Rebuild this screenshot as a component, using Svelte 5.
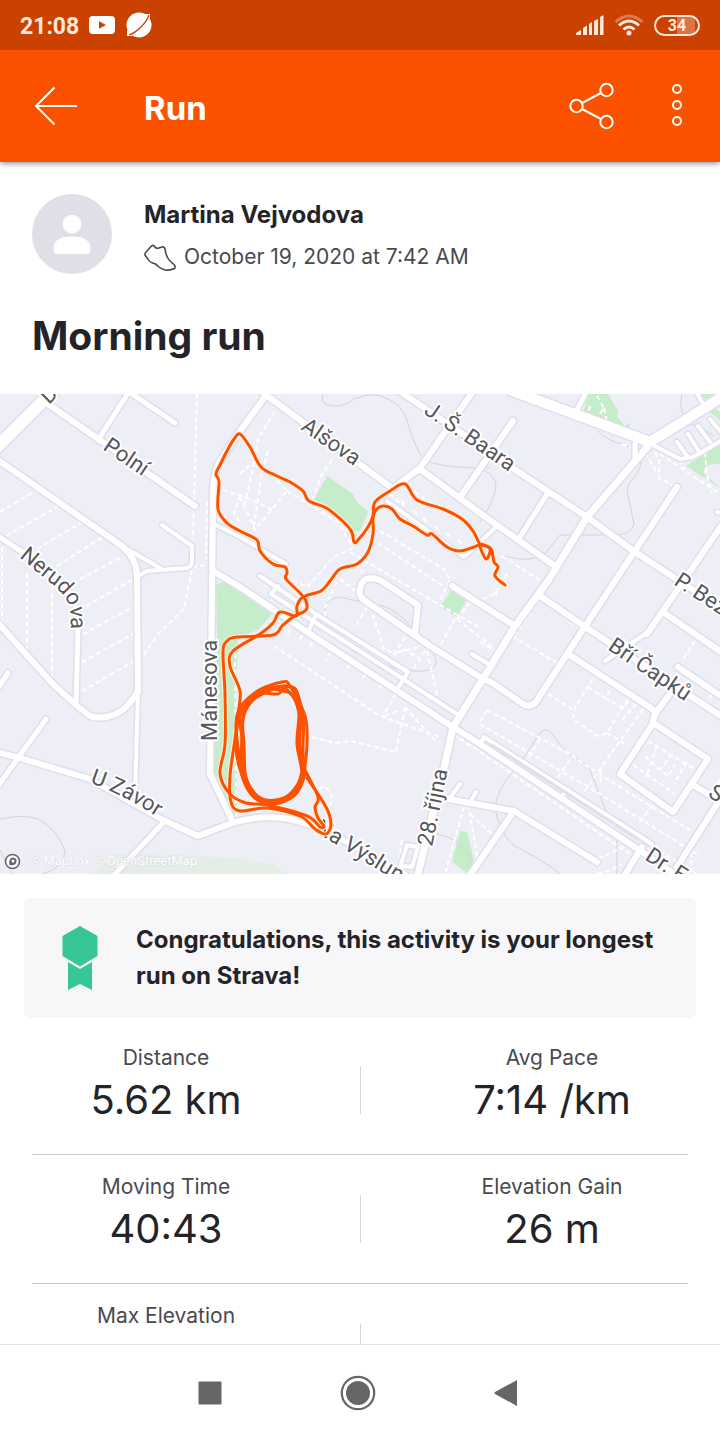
<script lang="ts">
	type Point = [number, number];

	const stats = [
		[
			{ label: 'Distance', value: '5.62 km' },
			{ label: 'Avg Pace', value: '7:14 /km' }
		],
		[
			{ label: 'Moving Time', value: '40:43' },
			{ label: 'Elevation Gain', value: '26 m' }
		],
		[{ label: 'Max Elevation', value: '' }, { label: '', value: '' }]
	];

	const parks = [
		'M327 82L353 100L357 108L368 118L360 137L353 138L343 125L314 105Z',
		'M216 190L225 188L272 220L258 236L238 243L236 300L237 410L234 424L222 404L214 380L217 240Z',
		'M452 195L467 205L457 223L440 213Z',
		'M460 437L467 438L474 467L467 479L452 468Z',
		'M588 0L608 0L618 17L617 22L625 32L630 29L628 36L583 19Z',
		'M686 72L720 50L720 70Q702 69 704 79L720 94Z',
		'M702 0L714 0L705 6L720 18L720 26L706 16Z'
	];

	const contours = [
		'M323 0Q320 9 328 11Q342 15 354 5Q374 -4 390 6Q402 12 407 26Q416 58 425 66Q440 74 490 74',
		'M482 75Q496 82 496 92Q494 108 480 128',
		'M598 37Q606 46 622 50Q640 56 641 69Q640 78 630 88Q625 94 629 106L634 130Q632 140 616 141L560 141L545 160Q536 166 520 165L503 162',
		'M325 217Q322 206 340 203L366 209Q396 210 415 238',
		'M433 258Q442 275 424 277Q402 278 383 270Q350 262 327 233',
		'M523 365L537 343Q545 330 553 341Q560 352 570 361Q584 366 590 376L607 420',
		'M513 378Q496 396 495 415Q500 438 512 450L550 472L560 480',
		'M617 440L617 480',
		'M437 440Q462 444 472 467',
		'M0 425Q24 420 38 425Q58 436 65 457Q65 474 42 480',
		'M0 456L12 480',
		'M682 0Q677 18 691 30Q706 36 714 42'
	];

	const roads = [
		{ d: 'M-4 54L54 -4', w: 12 },
		{ d: 'M45 8L195 112', w: 6 },
		{ d: 'M130 -4L98 46M126 -4L175 29', w: 5 },
		{ d: 'M-2 66L122 152Q137 165 137 182L138 298', w: 6 },
		{ d: 'M122 152L160 174M138 182L147 177L187 174Q192 172 192 168L192 152L162 131M138 296L135 404', w: 4 },
		{ d: 'M-2 142L16 154Q70 186 76 214L78 236L76 310', w: 5 },
		{ d: 'M-2 229L53 290L76 311L90 322Q104 326 118 319Q128 314 138 297', w: 6 },
		{ d: 'M-2 294L8 279M-2 392L46 325', w: 5 },
		{ d: 'M-4 358L20 364L90 385L163 426L198 442L232 429Q262 420 290 425L322 434L410 484', w: 6 },
		{ d: 'M164 428L115 480', w: 5 },
		{ d: 'M270 -4L240 37L218 70Q213 84 213 100L210 380L233 428', w: 6 },
		{ d: 'M262 -2L392 94M474 -4L420 74L395 93', w: 6 },
		{ d: 'M387 107L464 163L496 133', w: 4 },
		{ d: 'M420 75L480 119L555 172M461 102L513 27', w: 6 },
		{ d: 'M398 -4L517 77L587 123L635 158L724 216', w: 6 },
		{ d: 'M510 -4L580 22L650 48L724 2', w: 10 },
		{ d: 'M586 -2L577 16M635 50L635 65M520 143L547 100', w: 5 },
		{ d: 'M650 50L587 123L548 187L515 232L483 285L453 333L445 370L417 484', w: 7 },
		{ d: 'M677 93L580 240L536 308Q531 314 523 310L491 288L483 285', w: 6 },
		{ d: 'M540 202L593 238L724 324M452 192L515 232', w: 6 },
		{ d: 'M724 128L647 240M663 218L724 260M678 273L724 304', w: 6 },
		{ d: 'M648 238L605 267M724 120L717 118', w: 4 },
		{ d: 'M568 260L648 312L655 317M671 298L655 320L652 331L620 380L673 418L708 365L655 330M693 391L720 407M717 410L677 473', w: 6 },
		{ d: 'M214 130L240 143L286 170M260 182L316 220L408 278L398 294M278 192L271 200L403 285L457 320M315 223L308 238', w: 4 },
		{ d: 'M213 177L240 193L310 240L453 333L480 350L645 460L680 484', w: 6 },
		{ d: 'M480 350L484 343L652 450M568 396L562 402', w: 4 },
		{ d: 'M415 240L418 211L380 186Q362 180 360 195Q358 203 368 209L413 240L430 252L483 285', w: 6 },
		{ d: 'M472 260L490 271M450 404L460 390M470 408L476 398M398 480L407 451L418 453L412 473L402 472', w: 4 },
		{ d: 'M448 405L514 417L597 468M514 417L468 484M642 453L623 484', w: 6 },
		{ d: 'M655 52L680 65L693 63L724 45M677 48L687 62M688 40L698 56M698 32L710 48M710 25L722 39M696 -2L702 8', w: 4 }
	];

	const footpaths = [
		'M197 0L193 145M207 107L206 165M192 173L206 171M192 176L184 215L158 240L143 262',
		'M0 118L35 97M6 142L57 113M37 155L82 128M57 172L103 143M80 185L122 163M86 212L133 185M83 240L133 213M82 268L133 240M82 297L138 265',
		'M2 153L2 233M27 180L27 256M52 192L52 283',
		'M275 17L258 45L252 80L243 115M268 57L262 80L253 137M215 94L240 101L273 116M240 80L254 67M272 80L287 97L254 137M240 103L256 137M287 97L338 128L352 152M332 66L321 82L313 104',
		'M240 101L234 120L240 128M353 154L334 163L307 193L290 185M350 158L433 207L480 234M373 133L444 175L450 185L440 207M378 149L443 192M363 167L361 180M340 185L360 200M337 188L325 213L325 230',
		'M390 100L404 112M401 107L406 112M413 116L418 120M423 124L427 128M435 132L439 137M446 139L450 143M458 146L462 150M415 98L440 115',
		'M367 213L355 233M370 213L384 255L397 260M405 243L394 261M398 258L424 252M427 257L438 305M425 257L410 280M403 255L424 267M497 202L493 194M455 225L440 252M457 225L495 255M457 225L470 208',
		'M274 252L280 256L380 322L440 343M397 317L382 323M290 235L286 243M302 241L298 249M312 248L309 256M330 258L326 267M350 270L346 278M365 280L361 288M382 290L378 298M396 300L383 322M405 313L396 358M405 313L436 348M312 343L335 349L350 347L396 358M453 340L470 352',
		'M590 12L586 26M597 2L604 14L597 24M604 14L607 28M622 50L647 62L658 80M597 117L637 70M655 58L659 66L659 84L676 93M660 60L720 100M680 65L685 75M705 58L707 82L712 100',
		'M502 162L544 189M507 180L495 200L483 205M540 205L516 240L497 262M545 208L580 235',
		'M512 242L557 269M480 248L496 257M548 300L572 315M593 285L575 313L573 325L597 342L607 339L628 305M588 293L605 304L610 297M605 304L623 314L628 307M607 339L628 352M643 315L600 375L583 400M636 310L620 328M695 247L682 267M712 300L706 310',
		'M487 316L480 328M487 316L570 360L602 382L690 436M480 330L600 400L700 462M540 345L527 367M570 366L558 383M600 375L601 388M640 428L654 409M480 358L640 467M460 344L480 358',
		'M648 347L694 375M633 371L675 400M657 352L646 383M672 360L660 376L668 382L675 371M687 368L674 390M645 362L660 376',
		'M660 457L720 495M597 480L608 477L622 470M598 465L625 452M690 450L692 478',
		'M466 405L462 420L445 480M468 410L478 465M470 420L492 440M398 475L402 445M238 252L235 265L236 424M319 395L325 392L332 402L330 414'
	];

	// Street names run along their own baseline
	const names = [
		{ text: 'D', d: 'M49 11L90 -30' },
		{ text: 'Polní', d: 'M102 55L170 101' },
		{ text: 'Nerudova', d: 'M19 163L48 187Q66 200 70 214L72 260' },
		{ text: 'Alšova', d: 'M300 35L380 90' },
		{ text: 'J. Š. Baara', d: 'M423 19L540 99' },
		{ text: 'P. Bez', d: 'M673 190L800 273' },
		{ text: 'Bří Čapků', d: 'M607 255L720 331' },
		{ text: 'Mánesova', d: 'M217 347L217 220' },
		{ text: 'U Závor', d: 'M90 389Q130 402 180 439' },
		{ text: 'Na Výslun', d: 'M314 438Q335 449 440 514' },
		{ text: '28. října', d: 'M432 453L454 345' },
		{ text: 'Dr. E', d: 'M644 465L760 541' },
		{ text: 'Š', d: 'M707 402L800 460' }
	];

	const outbound: Point[] = [
		[505, 191], [495, 182], [498, 173], [494, 168], [492, 157], [489, 153], [480, 151],
		[486, 165], [490, 155], [480, 151], [474, 153], [460, 157], [447, 153], [432, 140],
		[427, 141], [413, 132], [400, 125], [392, 115], [383, 112], [375, 117], [373, 125],
		[373, 140], [368, 158], [357, 170], [340, 175], [330, 187], [321, 197], [303, 203],
		[297, 212], [296, 222], [280, 218], [273, 229], [260, 240], [233, 257], [230, 272],
		[240, 297], [238, 320], [235, 345], [230, 382], [231, 408], [240, 417], [267, 414],
		[300, 422], [315, 435], [326, 440], [331, 430], [326, 413], [307, 384]
	];

	const inbound: Point[] = [
		[305, 376], [318, 403], [315, 413], [318, 424], [324, 432], [320, 433], [307, 422],
		[267, 411], [246, 409], [230, 400], [220, 380], [225, 350], [225, 300], [223, 258],
		[227, 247], [237, 243], [273, 241], [282, 232], [293, 223], [306, 216], [306, 207],
		[300, 199], [286, 185], [287, 179], [285, 173], [273, 170], [260, 157], [257, 146],
		[240, 137], [227, 129], [218, 115], [219, 88], [216, 80], [220, 71], [227, 57],
		[234, 45], [240, 40], [250, 53], [261, 73], [277, 82], [290, 88], [303, 97],
		[309, 107], [328, 115], [350, 135], [354, 148], [358, 146], [368, 133], [373, 122],
		[375, 108], [390, 97], [405, 90], [417, 106], [443, 115], [462, 125], [473, 137],
		[480, 151]
	];

	const laps: Point[][] = [
		[[296, 296], [299, 320], [297, 350], [302, 382], [292, 400], [272, 409], [256, 403], [246, 386], [244, 350], [243, 325], [252, 307], [269, 297], [284, 293]],
		[[293, 302], [300, 325], [300, 352], [305, 378], [294, 402], [272, 408], [254, 403], [241, 378], [242, 345], [240, 322], [252, 303], [267, 295], [283, 297]],
		[[295, 295], [303, 324], [303, 350], [302, 385], [290, 404], [270, 410], [255, 400], [240, 375], [236, 348], [241, 318], [255, 302], [275, 293]],
		[[290, 292], [305, 322], [307, 350], [303, 380], [292, 401], [272, 407], [258, 404], [244, 380], [237, 345], [238, 318], [256, 298], [282, 288]],
		[[286, 295], [301, 318], [298, 350], [302, 380], [288, 402], [270, 409], [252, 400], [244, 376], [242, 345], [245, 315], [260, 300], [278, 300]]
	];

	// Rounds a list of points off into one flowing line
	function smooth(points: Point[], closed = false) {
		const n = points.length;
		const at = (i: number) => (closed ? points[(i + n) % n] : points[Math.max(0, Math.min(n - 1, i))]);
		let d = `M${points[0]}`;
		for (let i = 0; i < (closed ? n : n - 1); i++) {
			const [a, b, c, e] = [at(i - 1), at(i), at(i + 1), at(i + 2)];
			d += `C${b[0] + (c[0] - a[0]) / 6},${b[1] + (c[1] - a[1]) / 6} ${c[0] - (e[0] - b[0]) / 6},${c[1] - (e[1] - b[1]) / 6} ${c}`;
		}
		return d;
	}

	const route = [smooth(outbound), smooth(inbound)];
	const track = laps.map((lap) => smooth(lap, true));
</script>

<div class="screen">
	<div class="status">
		<span class="clock">21:08</span>
		<svg width="26" height="18" viewBox="0 0 26 18" aria-hidden="true">
			<rect width="26" height="18" rx="4" fill="#fff" />
			<path d="M10 5.2v7.6L17 9z" fill="#cb4100" />
		</svg>
		<svg width="28" height="28" viewBox="0 0 28 28" aria-hidden="true">
			<circle cx="14" cy="14" r="12.5" fill="#fff" />
			<path d="M18 3L25 3L25 9zM2 19L2 25L8 25z" fill="#fff" />
			<path d="M4 24Q10 22 16 16Q22 10 24 4" fill="none" stroke="#cb4100" stroke-width="1.300" />
		</svg>
		<span class="spacer"></span>
		<svg width="28" height="20" viewBox="0 0 28 20" fill="#ffe9df" aria-hidden="true">
			<path d="M0 20v-2l5-3v5zM7 20v-7l4-2.500v9.500zM13 20V9l3-2v13zM18 20V6l4-2v16zM24 20V2l3.500-2v20z" />
		</svg>
		<svg width="30" height="22" viewBox="0 0 30 22" fill="none" stroke="#ffe9df" stroke-width="3" aria-hidden="true">
			<path d="M1.500 8Q15 -4 28.500 8" opacity=".35" />
			<path d="M5 11.500Q15 2.500 25 11.500M9.500 15.500Q15 10.500 20.500 15.500" />
			<circle cx="15" cy="19" r="2.500" fill="#ffe9df" stroke="none" />
		</svg>
		<span class="battery">34</span>
	</div>

	<header class="bar">
		<button aria-label="Back">
			<svg width="44" height="40" viewBox="0 0 44 40" fill="none" stroke="#fff" stroke-width="2">
				<path d="M20.500 1.500L2 20L20.500 38.500M2 20H43" />
			</svg>
		</button>
		<h1>Run</h1>
		<button aria-label="Share">
			<svg width="46" height="48" viewBox="0 0 46 48" fill="none" stroke="#fff" stroke-width="2">
				<circle cx="7.500" cy="24" r="6.200" />
				<circle cx="37.500" cy="8" r="6.200" />
				<circle cx="37.500" cy="40" r="6.200" />
				<path d="M13 21L32 11M13 27L32 37" />
			</svg>
		</button>
		<button aria-label="More options">
			<svg width="12" height="44" viewBox="0 0 12 44" fill="none" stroke="#fff" stroke-width="2">
				<circle cx="6" cy="5" r="4" />
				<circle cx="6" cy="21" r="4" />
				<circle cx="6" cy="37" r="4" />
			</svg>
		</button>
	</header>

	<main>
		<section class="athlete">
			<svg width="80" height="80" viewBox="0 0 80 80" aria-hidden="true">
				<circle cx="40" cy="40" r="40" fill="#dfdfe8" />
				<circle cx="40" cy="30" r="9.300" fill="#fff" />
				<path d="M21.500 54Q22 42.500 40 42.500Q58 42.500 58.500 54Q58.500 57 57 60H23Q21.500 57 21.500 54Z" fill="#fff" />
			</svg>
			<div>
				<p class="name">Martina Vejvodova</p>
				<p class="date">
					<svg width="32" height="27" viewBox="0 0 32 27" fill="none" stroke="#494950" stroke-width="1.600" stroke-linejoin="round" aria-hidden="true">
						<path d="M1 11Q0.500 9.500 2 8L7.500 2Q9 0.500 10.500 2.500Q12 5 15 4L18 3Q20.500 2.500 21 5Q22 13 26 17L30 20.500Q32 23 30.500 24.500Q27 26.500 21 26Q17 25 14.500 22.500Q12 19.500 7.500 18.500Q5 17.500 3.500 14.500Z" />
					</svg>
					October 19, 2020 at 7:42 AM
				</p>
			</div>
		</section>

		<h2>Morning run</h2>

		<svg class="map" viewBox="0 0 720 480" role="img" aria-label="Route map">
			<rect width="720" height="480" fill="#eeeef7" />
			<path d="M93 480L115 460L200 462L240 465L273 470L287 480Z" fill="#e4eee6" />
			{#each parks as d}
				<path {d} fill="#c5edc9" />
			{/each}
			<g fill="none" stroke="#d3d3d6" stroke-width="1">
				{#each contours as d}
					<path {d} />
				{/each}
			</g>
			<g class="footpaths">
				{#each footpaths as d}
					<path {d} />
				{/each}
			</g>
			<g class="roads">
				{#each roads as road}
					<path d={road.d} stroke="#dfdeee" stroke-width={road.w + 3} />
				{/each}
				{#each roads as road}
					<path d={road.d} stroke="#fff" stroke-width={road.w} />
				{/each}
				<path d="M492 351L638 445" stroke="#dfdeee" stroke-width="3" />
			</g>
			<g class="street-names">
				{#each names as name, i}
					<path id="street-{i}" d={name.d} fill="none" stroke="none" />
					<text><textPath href="#street-{i}">{name.text}</textPath></text>
				{/each}
			</g>
			<g class="route">
				{#each route as d}
					<path {d} stroke="#fff0de" stroke-width="5" />
				{/each}
				{#each route as d}
					<path {d} stroke="#fc5200" stroke-width="3" />
				{/each}
				{#each track as d}
					<path {d} stroke="#fc5200" stroke-width="3" />
				{/each}
				<path d="M241 368Q247 409 272 408Q297 407 303 380" stroke="#fc5200" stroke-width="6" />
			</g>
			<circle cx="12.500" cy="467.500" r="7" fill="#fff" stroke="#66666c" stroke-width="1.600" />
			<path d="M9.500 471Q8 464 13 463.500Q17 464 16.500 467.500Q16 472 9.500 471Z" fill="#66666c" />
			<circle cx="13" cy="467" r="1.500" fill="#fff" />
			<text class="credit" x="30" y="471">© Mapbox © OpenStreetMap</text>
		</svg>

		<section class="award">
			<svg width="36" height="64" viewBox="0 0 36 64" fill="#37c797" aria-hidden="true">
				<path d="M18 0L35.500 10V30L18 40.500L0.500 30V10Z" />
				<path d="M6 36L18 43L30 36V64L18 58L6 64Z" />
			</svg>
			<p>Congratulations, this activity is your longest run on Strava!</p>
		</section>

		<section class="stats">
			{#each stats as row}
				<div class="row">
					{#each row as stat}
						<div class="stat">
							<span class="label">{stat.label}</span>
							<span class="value">{stat.value}</span>
						</div>
					{/each}
				</div>
			{/each}
		</section>
	</main>

	<nav>
		<button aria-label="Recent apps">
			<svg width="24" height="24" viewBox="0 0 24 24"><rect x="0.500" y="0.500" width="23" height="23" rx="1" fill="#666" /></svg>
		</button>
		<button aria-label="Home">
			<svg width="36" height="36" viewBox="0 0 36 36">
				<circle cx="18" cy="18" r="16.200" fill="none" stroke="#666" stroke-width="2.200" />
				<circle cx="18" cy="18" r="12" fill="#666" />
			</svg>
		</button>
		<button aria-label="Go back">
			<svg width="28" height="28" viewBox="0 0 28 28"><path d="M23 1V27L1 15Q0 14 1 13Z" fill="#666" /></svg>
		</button>
	</nav>
</div>

<style>
	:global(body) {
		margin: 0;
		background: #fff;
	}

	.screen {
		display: flex;
		flex-direction: column;
		height: 100vh;
		overflow: hidden;
		font-family: Inter, 'Liberation Sans', sans-serif;
		color: #242428;
	}

	p,
	h1,
	h2 {
		margin: 0;
	}

	svg {
		display: block;
		flex: none;
	}

	button {
		display: grid;
		place-items: center;
		padding: 0;
		border: 0;
		background: none;
		cursor: pointer;
	}

	.status {
		position: relative;
		display: flex;
		flex: none;
		align-items: center;
		gap: 10px;
		height: 50px;
		padding: 0 20px;
		background: #cb4100;
		color: #ffe9df;
		font-family: Roboto, sans-serif;
		z-index: 2;
	}

	.clock {
		padding-top: 2px;
		font-size: 23px;
		font-weight: 700;
	}

	.spacer {
		flex: 1;
	}

	.battery {
		width: 42px;
		border: 2px solid #ffe9df;
		border-radius: 11px;
		background: linear-gradient(90deg, transparent 50%, #dc7444 50% 92%, transparent 92%);
		font-size: 16px;
		font-weight: 700;
		line-height: 17px;
		text-align: center;
	}

	.bar {
		display: flex;
		flex: none;
		align-items: center;
		gap: 56px;
		height: 112px;
		padding: 0 37px 0 34px;
		background: #fc5200;
		color: #fff;
		box-shadow: 0 1px 6px rgba(0, 0, 0, 0.5);
		z-index: 1;
	}

	.bar h1 {
		flex: 1;
		padding: 4px 0 0 10px;
		font-size: 33px;
		font-weight: 700;
	}

	main {
		flex: 1;
		min-height: 0;
		overflow: hidden;
	}

	.athlete {
		display: flex;
		gap: 32px;
		padding: 32px 32px 0;
	}

	.name {
		font-size: 24px;
		font-weight: 700;
		line-height: 42px;
	}

	.date {
		display: flex;
		align-items: center;
		gap: 8px;
		color: #494950;
		font-size: 21px;
		line-height: 42px;
	}

	h2 {
		padding: 30px 32px;
		font-size: 39px;
		font-weight: 700;
		line-height: 56px;
	}

	.map {
		width: 100%;
	}

	.footpaths {
		fill: none;
		stroke: #fff;
		stroke-width: 2;
		stroke-dasharray: 5 3;
	}

	.roads,
	.route {
		fill: none;
		stroke-linecap: round;
		stroke-linejoin: round;
	}

	.street-names {
		fill: #56565c;
		stroke: #fff;
		stroke-width: 4;
		stroke-linejoin: round;
		paint-order: stroke;
		font-family: Roboto, sans-serif;
		font-size: 22px;
	}

	.credit {
		fill: #fff;
		stroke: #dcdce4;
		stroke-width: 1;
		paint-order: stroke;
		font-family: Roboto, sans-serif;
		font-size: 13px;
	}

	.award {
		display: flex;
		align-items: center;
		gap: 38px;
		margin: 24px 24px 8px;
		padding: 24px 24px 24px 38px;
		border-radius: 6px;
		background: #f7f7fa;
		font-size: 24px;
		font-weight: 700;
		line-height: 36px;
	}

	.stats {
		padding: 0 32px;
	}

	.row {
		display: grid;
		grid-template-columns: 1fr 1fr;
		height: 128px;
		border-bottom: 1px solid #c8c8cd;
		background: linear-gradient(#d5d5da, #d5d5da) center / 1px 48px no-repeat;
	}

	.stat {
		display: flex;
		flex-direction: column;
		align-items: center;
		padding-top: 16px;
	}

	.stat:first-child {
		padding-right: 60px;
	}

	.stat:last-child {
		padding-left: 56px;
	}

	.label {
		min-height: 32px;
		color: #494950;
		font-size: 21px;
		line-height: 32px;
	}

	.value {
		font-size: 40px;
		line-height: 52px;
	}

	nav {
		display: flex;
		flex: none;
		align-items: center;
		justify-content: center;
		gap: 118px;
		height: 95px;
		border-top: 1px solid #e2e2e2;
		background: #fff;
	}
</style>
